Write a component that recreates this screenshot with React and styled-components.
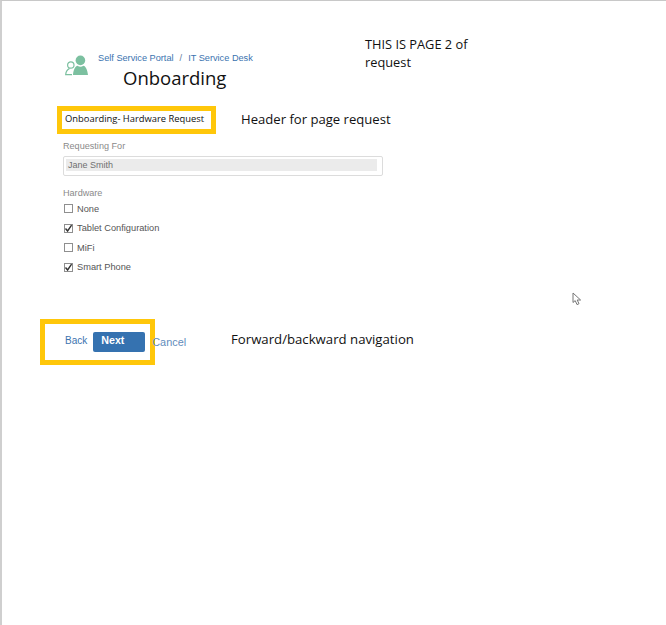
import React from 'react';
import styled, { createGlobalStyle } from 'styled-components';

const GlobalStyle = createGlobalStyle`
  html, body { margin: 0; padding: 0; background: #fff; }
  body { font-family: "Liberation Sans", Arial, sans-serif; }
`;

const hardware = [
  { label: 'None', checked: false },
  { label: 'Tablet Configuration', checked: true },
  { label: 'MiFi', checked: false },
  { label: 'Smart Phone', checked: true },
];

const PersonIcon = () => (
  <svg width="24" height="23" viewBox="0 0 24 23">
    <circle cx="15.4" cy="5.4" r="4.8" fill="#7cc0a0" />
    <path d="M8 20 C8.6 14 10.5 11 12.5 10.8 C14.5 12.2 16.5 12.2 18.4 10.8 C20.6 11.2 22.4 14.5 23 20 Z" fill="#7cc0a0" />
    <circle cx="5.8" cy="10" r="3.2" fill="none" stroke="#7cc0a0" strokeWidth="1.2" />
    <path d="M4.6 13.4 C2.2 14.6 0.9 16.8 0.7 19.6 H7" fill="none" stroke="#7cc0a0" strokeWidth="1.2" />
  </svg>
);

const CursorIcon = () => (
  <svg width="11" height="14" viewBox="0 0 11 14">
    <path d="M1 1 V10.5 L3.2 8.6 L5 12.6 L7 11.7 L5.2 8 H8.6 Z" fill="#fff" stroke="#777" strokeWidth="1" />
  </svg>
);

const App = () => (
  <Page>
    <GlobalStyle />
    <TopRow>
      <IconSlot><PersonIcon /></IconSlot>
      <Titles>
        <Breadcrumbs>
          <Crumb>Self Service Portal</Crumb>
          <Slash>/</Slash>
          <Crumb>IT Service Desk</Crumb>
        </Breadcrumbs>
        <Title>Onboarding</Title>
      </Titles>
      <PageNote>THIS IS PAGE 2 of<br />request</PageNote>
    </TopRow>

    <HeaderRow>
      <HighlightHeader>Onboarding- Hardware Request</HighlightHeader>
      <Note>Header for page request</Note>
    </HeaderRow>

    <FormBlock>
      <FieldLabel>Requesting For</FieldLabel>
      <Picker>
        <PickerValue>Jane Smith</PickerValue>
      </Picker>
      <HardwareLabel>Hardware</HardwareLabel>
      <CheckList>
        {hardware.map((item) => (
          <CheckRow key={item.label}>
            <Box>
              {item.checked && (
                <svg width="9" height="9" viewBox="0 0 9 9">
                  <path d="M1.5 4.5 L3.6 7 L7.6 1.2" fill="none" stroke="#333" strokeWidth="1.4" />
                </svg>
              )}
            </Box>
            <CheckText>{item.label}</CheckText>
          </CheckRow>
        ))}
      </CheckList>
    </FormBlock>

    <NavRow>
      <HighlightNav>
        <BackLink>Back</BackLink>
        <NextButton>Next</NextButton>
        <CancelLink>Cancel</CancelLink>
      </HighlightNav>
      <NavNote>Forward/backward navigation</NavNote>
    </NavRow>

    <Cursor><CursorIcon /></Cursor>
  </Page>
);

export default App;

const Page = styled.div`
  position: relative;
  width: 666px;
  height: 625px;
  box-sizing: border-box;
  border-top: 1px solid #c8c8c8;
  border-left: 2px solid #cfcfcf;
  padding-top: 36px;
  overflow: hidden;
  background: #fff;
`;

const TopRow = styled.div`
  display: flex;
  align-items: flex-start;
  height: 69px;
`;

const IconSlot = styled.div`
  width: 33px;
  margin-left: 63px;
  padding-top: 18px;
  line-height: 0;
`;

const Titles = styled.div`
  width: 267px;
  padding-top: 16px;
`;

const Breadcrumbs = styled.div`
  display: flex;
  font-size: 9.2px;
  line-height: 10px;
  color: #3b73af;
`;

const Crumb = styled.span``;

const Slash = styled.span`
  margin: 0 6px;
  color: #5f7a99;
`;

const Title = styled.h1`
  margin: 1px 0 0 25px;
  font-family: "Open Sans", sans-serif;
  font-size: 18.5px;
  line-height: 27px;
  font-weight: 400;
  color: #111;
`;

const PageNote = styled.div`
  margin-top: -2px;
  font-family: "Open Sans", sans-serif;
  font-size: 12.8px;
  line-height: 18px;
  color: #111;
`;

const HeaderRow = styled.div`
  display: flex;
  align-items: center;
`;

const HighlightHeader = styled.div`
  box-sizing: border-box;
  width: 159px;
  height: 28px;
  margin-left: 55px;
  padding-left: 3px;
  border: 5px solid #ffc70a;
  font-family: "Open Sans", sans-serif;
  font-size: 9.4px;
  line-height: 16px;
  white-space: nowrap;
  color: #111;
`;

const Note = styled.div`
  margin: 0 0 2px 25px;
  font-family: "Open Sans", sans-serif;
  font-size: 13.1px;
  color: #111;
`;

const FormBlock = styled.div`
  margin: 6px 0 0 61px;
  width: 320px;
`;

const FieldLabel = styled.div`
  font-size: 9.1px;
  line-height: 12px;
  color: #8a8a8a;
`;

const Picker = styled.div`
  box-sizing: border-box;
  height: 20px;
  margin-top: 4px;
  padding: 2px 5px 0 2px;
  border: 1px solid #dcdcdc;
  border-radius: 2px;
`;

const PickerValue = styled.div`
  height: 12px;
  padding-left: 2px;
  background: #ebebeb;
  font-size: 9px;
  line-height: 12px;
  color: #707070;
`;

const HardwareLabel = styled(FieldLabel)`
  margin-top: 11px;
`;

const CheckList = styled.div`
  margin-top: 0;
`;

const CheckRow = styled.div`
  display: flex;
  align-items: center;
  height: 19.5px;
`;

const Box = styled.div`
  box-sizing: border-box;
  width: 9px;
  height: 9px;
  margin-left: 1px;
  border: 1px solid #8f8f8f;
  background: #fff;
  display: flex;
  align-items: center;
  justify-content: center;
  & svg { flex: none; }
`;

const CheckText = styled.span`
  margin-left: 4px;
  font-size: 9.25px;
  color: #555;
`;

const NavRow = styled.div`
  display: flex;
  align-items: center;
  margin-top: 42px;
`;

const HighlightNav = styled.div`
  box-sizing: border-box;
  display: flex;
  align-items: center;
  width: 115px;
  height: 46px;
  margin-left: 38px;
  padding-left: 20px;
  border: 5px solid #ffc70a;
`;

const BackLink = styled.span`
  margin-bottom: 4px;
  font-size: 10px;
  color: #3b73af;
`;

const NextButton = styled.div`
  box-sizing: border-box;
  flex: none;
  width: 52px;
  height: 20px;
  margin-left: 6px;
  padding-left: 8px;
  border-radius: 2px;
  background: #3572b0;
  color: #fff;
  font-size: 10.7px;
  font-weight: 700;
  line-height: 17px;
`;

const CancelLink = styled.span`
  margin: 0 0 0 7px;
  font-size: 10.9px;
  color: #5f8cbb;
`;

const NavNote = styled.div`
  margin: 0 0 6px 76px;
  font-family: "Open Sans", sans-serif;
  font-size: 13.2px;
  color: #111;
`;

const Cursor = styled.div`
  position: absolute;
  left: 570px;
  top: 291px;
  line-height: 0;
`;
